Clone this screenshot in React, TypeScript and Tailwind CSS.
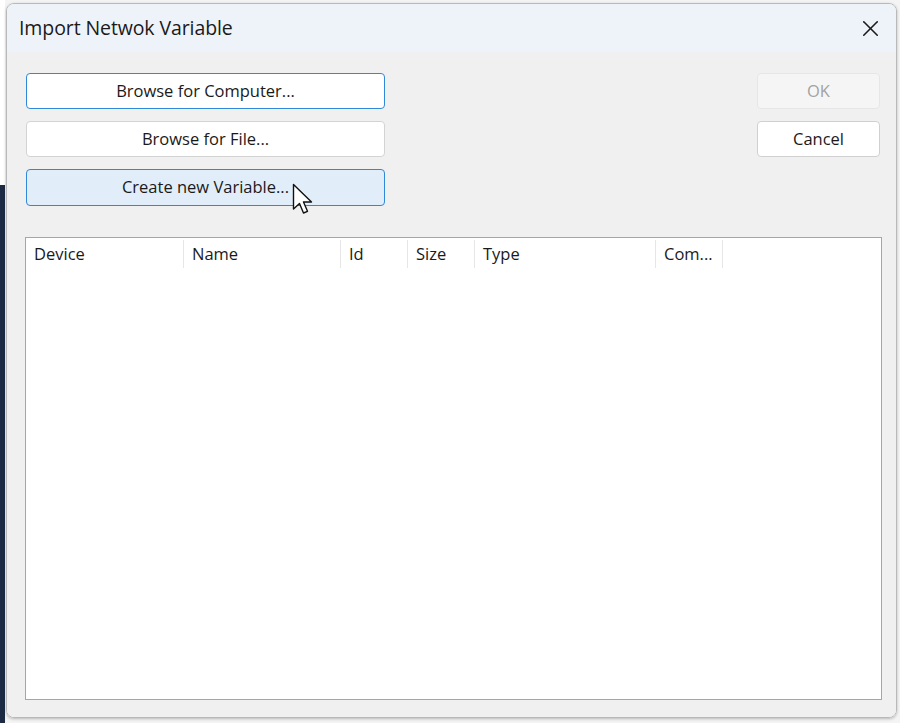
import { X } from "lucide-react";

const columns = [
  { label: "Device", width: 158 },
  { label: "Name", width: 157 },
  { label: "Id", width: 67 },
  { label: "Size", width: 67 },
  { label: "Type", width: 181 },
  { label: "Com...", width: 67 },
];

function Cursor() {
  return (
    <svg className="absolute left-[266px] top-[14px]" width="24" height="34" viewBox="0 0 24 34">
      <path
        d="M1.5 1.5 L1.5 26 L7.5 20.5 L11.5 30 L15.5 28.3 L11.5 19 L19.5 19 Z"
        fill="#ffffff"
        stroke="#111111"
        strokeWidth="1.4"
        strokeLinejoin="round"
      />
    </svg>
  );
}

export default function App() {
  return (
    <div className="w-[900px] h-[723px] bg-[#f4f4f4] flex font-['Open_Sans',sans-serif] text-[#1a1a1a]">
      <div className="w-[5px] flex flex-col">
        <div className="h-[185px] bg-white" />
        <div className="flex-1 bg-[#1c2a44]" />
      </div>
      <div className="flex-1 pt-[3px] pl-[1px] pr-[3px] pb-[5px] flex">
        <div className="flex-1 flex flex-col rounded-[8px] border border-[#b9b9b9] overflow-hidden shadow-[0_1px_3px_rgba(0,0,0,0.25)]">
          <div className="h-[48px] bg-[#eef3fa] flex items-center justify-between pl-[12px] pr-[12px]">
            <span className="text-[19.5px] tracking-[-0.1px] pb-[1px]">Import Netwok Variable</span>
            <X className="w-[27px] h-[27px] text-[#1a1a1a]" strokeWidth={1.4} />
          </div>
          <div className="flex-1 bg-[#f0f0f0] flex flex-col pl-[18px] pr-[14px] pt-[21px] pb-[17px]">
            <div className="flex justify-between pl-[1px] pr-[2px]">
              <div className="relative w-[359px] flex flex-col gap-[12px]">
                <button className="h-[36px] rounded-[4px] border-[1.5px] border-[#2f88d8] bg-white text-[16.5px]">
                  Browse for Computer...
                </button>
                <button className="h-[36px] rounded-[4px] border border-[#d3d3d3] bg-white text-[16.5px]">
                  Browse for File...
                </button>
                <button className="h-[37px] rounded-[4px] border-[1.5px] border-[#2f88d8] bg-[#e1eef9] text-[16.5px]">
                  Create new Variable...
                </button>
                <div className="absolute left-0 top-[96px]">
                  <Cursor />
                </div>
              </div>
              <div className="w-[123px] flex flex-col gap-[12px]">
                <button className="h-[36px] rounded-[4px] border border-[#e6e6e6] bg-[#f5f5f5] text-[16.5px] text-[#a3a3a3]">
                  OK
                </button>
                <button className="h-[36px] rounded-[4px] border border-[#d0d0d0] bg-white text-[16.5px]">
                  Cancel
                </button>
              </div>
            </div>
            <div className="mt-[31px] flex-1 border-[1.5px] border-[#a4a6aa] bg-white">
              <div className="flex h-[32px] items-center">
                {columns.map((c) => (
                  <div
                    key={c.label}
                    style={{ width: c.width }}
                    className="h-[28px] flex items-center pl-[8px] border-r border-[#e6e6e6] text-[16.5px]"
                  >
                    {c.label}
                  </div>
                ))}
              </div>
            </div>
          </div>
        </div>
      </div>
    </div>
  );
}
